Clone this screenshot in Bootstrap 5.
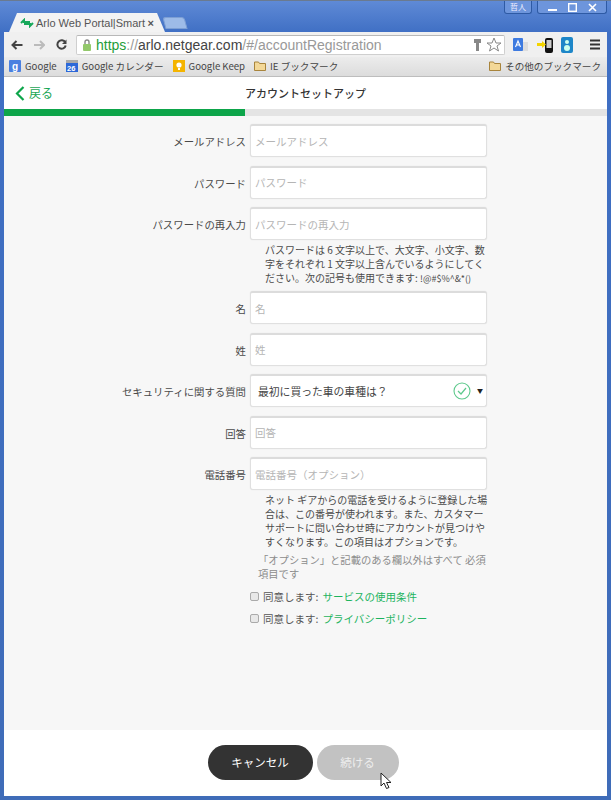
<!DOCTYPE html>
<html lang="ja">
<head>
<meta charset="utf-8">
<title>Arlo Web Portal</title>
<link href="https://cdn.jsdelivr.net/npm/bootstrap@5.3.0/dist/css/bootstrap.min.css" rel="stylesheet">
<style>
html,body{margin:0;height:800px;overflow:hidden}
body{width:611px;background:#3f6cb8;font-family:"Noto Sans CJK JP","Liberation Sans",sans-serif;font-size:11px;color:#4a4a4a}
.win{height:800px;padding:0 4px 4px;background:linear-gradient(#5f8ad6 0,#3f6fc4 32px,#3f6cb8 100%);border-top:1px solid #6a7a90}
.tabstrip{height:31px;position:relative}
.tab-on{position:absolute;left:5px;top:12px;width:156px;height:19px;background:#f3f3f3;clip-path:polygon(0 100%,8px 0,calc(100% - 8px) 0,100% 100%);display:flex;align-items:center;padding-left:11px;gap:2px;font:11px "Liberation Sans",sans-serif;color:#555;white-space:nowrap}
.tab-new{position:absolute;left:160px;top:16px;width:22px;height:12px;background:#9dbbe8;border:1px solid #7d9fd4;border-radius:3px 3px 0 0;transform:skewX(15deg)}
.tabx{margin-left:auto;margin-right:11px;font-weight:bold;font-size:11px;color:#555}
.wbtns{position:absolute;top:0;right:0;display:flex;gap:5px}
.wbtn{height:13px;border:1px solid #2e5aa4;border-top:0;border-radius:0 0 3px 3px;background:#6d95dc;color:#fff;font-size:8px;line-height:12px;display:flex;align-items:center;justify-content:center}
.wbtn-user{width:28px;color:#eef}
.wbtn-ctl{width:70px;justify-content:space-around;padding:0 4px}
.toolbar{height:25px;background:#f0f0f0;display:flex;align-items:center;padding-left:7px}
.tbgap{margin-left:11px}
.omni{width:429px;margin-left:9px;height:20px;background:#fff;border:1px solid #cfcfcf;border-top-color:#b8b8b8;border-radius:2px;display:flex;align-items:center;padding:0 2px 0 5px;font:14px "Liberation Sans",sans-serif;color:#999;white-space:nowrap}
.omni b{font-weight:400;color:#1f9d3a}
.omni i{font-style:normal;color:#444}
.ext1{margin-left:8px}
.ext2{margin-left:9px}
.ext3{margin-left:8px}
.ext4{margin-left:16px}
.bmarks{height:20px;background:linear-gradient(#ececec,#dcdcdc);border-bottom:1px solid #bdbdbd;display:flex;align-items:center;padding-left:5px;gap:9px;font-size:9.6px;color:#444;white-space:nowrap}
.bm{display:flex;align-items:center;gap:4px}
.bm-end{margin-left:auto;margin-right:6px}
.ic12{width:12px;height:12px;flex:none}
.pagehead{height:32px;background:#fff;position:relative;display:flex;align-items:center;justify-content:center;font-size:11px;font-weight:500;color:#333}
.backlink{position:absolute;left:11px;top:7px;display:flex;align-items:center;gap:4px;color:#1aa655;font-size:12px;font-weight:400}
.prog{height:7px;background:#e4e4e4}
.prog-fill{width:241px;height:7px;background:#0da54a}
.formarea{height:614px;background:#f7f7f7;padding-top:8px}
.frow{display:flex;align-items:flex-start;height:33px;margin-bottom:8.5px}
.flabel{width:246px;text-align:right;padding-right:4px;line-height:33px;font-size:10.4px;color:#4a4a4a;white-space:nowrap;margin-top:1px}
.finput{width:237px;height:33px;border:1px solid #e0e0e0;border-top:2px solid #dcdcdc;border-radius:3px;background:#fff;padding:0 4px;font-size:10.5px;line-height:30px;color:#333;box-shadow:0 0 1px #ddd;outline:0}
.finput::placeholder{color:#b5b5b5;opacity:1}
.selbox{display:flex;align-items:center;padding:0 2px 0 7px;font-size:10.8px;color:#444}
.selbox svg{margin-left:auto}
.caret-dn{font-size:6px;margin-left:6px;margin-right:1px;color:#222}
.helptxt{margin-left:261px;font-size:10px;line-height:14.2px;color:#4a4a4a;white-space:nowrap}
.help1{margin-top:-6px;margin-bottom:5px}
.help2{margin-top:-6px;margin-bottom:4px}
.symbols{font-size:9px}
.reqnote{margin-left:254px;font-size:10.3px;line-height:14px;color:#8c8c8c;white-space:nowrap}
.chk{margin-left:246px;display:flex;align-items:center;gap:4px;height:14px;margin-top:8px;color:#555;font-size:10.5px}
.chk a{color:#1db45f;text-decoration:none}
.chkbox{width:9px;height:9px;margin:0;appearance:none;-webkit-appearance:none;background:#e8e8e8;border:1px solid #aaa;border-radius:2px;flex:none}
.foot{height:66px;background:#fff;display:flex;justify-content:center;padding-top:15px;padding-right:5px;gap:4px;position:relative}
.pill{height:35px;border-radius:18px;border:0;font-size:11.5px;padding:0;color:#fff}
.pill-dark{width:105px;background:#333}
.pill-off{width:82px;background:#c2c2c2;color:#ededed}
.cursor{position:absolute;left:376px;top:42px}
</style>
</head>
<body>
<div class="win">
  <div class="tabstrip">
    <div class="tab-on">
      <svg width="14" height="10" viewBox="0 0 14 10"><path d="M1 5 L4 2 L4 4 L10 4 M13 5 L10 8 L10 6 L4 6" fill="none" stroke="#17a85a" stroke-width="2"/></svg>
      <span>Arlo Web Portal|Smart</span><span class="tabx">×</span>
    </div>
    <div class="tab-new"></div>
    <div class="wbtns">
      <div class="wbtn wbtn-user">哲人</div>
      <div class="wbtn wbtn-ctl">
        <svg width="9" height="9" viewBox="0 0 9 9"><rect x="0" y="6" width="9" height="2" fill="#fff"/></svg>
        <svg width="9" height="9" viewBox="0 0 9 9"><rect x="0.700" y="0.700" width="7.600" height="7.600" fill="none" stroke="#fff" stroke-width="1.400"/></svg>
        <svg width="9" height="9" viewBox="0 0 9 9"><path d="M1 1 L8 8 M8 1 L1 8" stroke="#fff" stroke-width="1.600"/></svg>
      </div>
    </div>
  </div>
  <div class="toolbar">
    <svg width="12" height="10" viewBox="0 0 11 10"><path d="M5 1 L1 5 L5 9 M1 5 H11" fill="none" stroke="#444" stroke-width="2"/></svg>
    <svg class="tbgap" width="11" height="10" viewBox="0 0 11 10"><path d="M6 1 L10 5 L6 9 M10 5 H0" fill="none" stroke="#bbb" stroke-width="2"/></svg>
    <svg class="tbgap" width="11" height="11" viewBox="0 0 11 11"><path d="M9.3 3.5 A4.2 4.2 0 1 0 9.7 6.5" fill="none" stroke="#444" stroke-width="2"/><path d="M10.5 0.5 V5 H6 Z" fill="#444"/></svg>
    <div class="omni">
      <svg width="10" height="12" viewBox="0 0 10 12" class="me-1 flex-none"><rect x="1" y="5" width="8" height="7" rx="1" fill="#93c86b"/><path d="M3 5 V3 a2 2 0 0 1 4 0 V5" fill="none" stroke="#888" stroke-width="1.4"/></svg>
      <span><b>https</b>://<i>arlo.netgear.com</i>/#/accountRegistration</span>
      <svg width="9" height="14" viewBox="0 0 9 14" class="ms-auto"><path d="M1 1 H8 V5 H6 V13 H3 V5 H1 Z" fill="#888"/></svg>
      <svg width="16" height="15" viewBox="0 0 16 15" class="ms-1"><path d="M8 1 L10 6 L15 6 L11 9 L12.5 14 L8 11 L3.500 14 L5 9 L1 6 L6 6 Z" fill="#fff" stroke="#888"/></svg>
    </div>
    <svg class="ext1" width="15" height="15" viewBox="0 0 15 15"><rect x="9" y="5" width="6" height="9" fill="#ddd"/><rect width="10" height="13" y="1" rx="1" fill="#3d7ae0"/><path d="M2.500 10 L5 4 L7.500 10 M3.500 8 H6.500" fill="none" stroke="#fff" stroke-width="1.100"/></svg>
    <svg class="ext2" width="16" height="16" viewBox="0 0 16 16"><rect x="8" y="1" width="8" height="15" rx="2" fill="#111"/><rect x="9.500" y="3" width="5" height="8" fill="#ccc"/><path d="M0 6 H5 V4 L9 7.500 L5 11 V9 H0 Z" fill="#f4d400"/></svg>
    <svg class="ext3" width="13" height="16" viewBox="0 0 13 16"><rect width="12" height="16" rx="2" fill="#1d86c8"/><circle cx="6" cy="5" r="2" fill="#cfe"/><circle cx="6" cy="11" r="3" fill="#cfe"/></svg>
    <svg class="ext4" width="11" height="11" viewBox="0 0 11 11"><path d="M0 1.500H10M0 5.500H10M0 9.500H10" stroke="#333" stroke-width="2"/></svg>
  </div>
  <div class="bmarks">
    <span class="bm"><svg class="ic12" viewBox="0 0 12 12"><rect width="12" height="12" rx="1" fill="#4a80e0"/><text x="3" y="10" font-size="10" font-weight="700" fill="#fff" font-family="Liberation Sans">g</text></svg>Google</span>
    <span class="bm"><svg class="ic12" viewBox="0 0 12 12"><rect width="12" height="12" fill="#2d68d8"/><rect width="12" height="3" fill="#aaa"/><text x="1" y="11" font-size="7.500" font-weight="700" fill="#fff" font-family="Liberation Sans">26</text></svg>Google カレンダー</span>
    <span class="bm"><svg class="ic12" viewBox="0 0 12 12"><rect width="12" height="12" fill="#f4b400"/><circle cx="6" cy="5" r="2.600" fill="#fff"/><rect x="5" y="8" width="2" height="2" fill="#fff"/></svg>Google Keep</span>
    <span class="bm"><svg class="ic12" viewBox="0 0 12 12"><path d="M0.500 2 H4.500 L5.500 3.500 H11.500 V10.500 H0.500 Z" fill="#f3d898" stroke="#a8843c"/></svg>IE ブックマーク</span>
    <span class="bm bm-end"><svg class="ic12" viewBox="0 0 12 12"><path d="M0.500 2 H4.500 L5.500 3.500 H11.500 V10.500 H0.500 Z" fill="#f3d898" stroke="#a8843c"/></svg>その他のブックマーク</span>
  </div>
  <div class="pagehead">
    <span class="backlink"><svg width="10" height="15" viewBox="0 0 10 15"><path d="M8.500 1 L2 7.500 L8.500 14" fill="none" stroke="#0da54a" stroke-width="2.200"/></svg>戻る</span>
    アカウントセットアップ
  </div>
  <div class="prog"><div class="prog-fill"></div></div>
  <form class="formarea">
    <div class="frow"><div class="flabel">メールアドレス</div><input class="finput" placeholder="メールアドレス"></div>
    <div class="frow"><div class="flabel">パスワード</div><input class="finput" placeholder="パスワード"></div>
    <div class="frow"><div class="flabel">パスワードの再入力</div><input class="finput" placeholder="パスワードの再入力"></div>
    <div class="helptxt help1">パスワードは 6 文字以上で、大文字、小文字、数<br>字をそれぞれ 1 文字以上含んでいるようにしてく<br>ださい。次の記号も使用できます: <span class="symbols">!@#$%^&amp;*()</span></div>
    <div class="frow"><div class="flabel">名</div><input class="finput" placeholder="名"></div>
    <div class="frow"><div class="flabel">姓</div><input class="finput" placeholder="姓"></div>
    <div class="frow"><div class="flabel">セキュリティに関する質問</div><div class="finput selbox">最初に買った車の車種は？<svg width="18" height="18" viewBox="0 0 18 18"><circle cx="9" cy="9" r="8" fill="none" stroke="#5dc98c" stroke-width="1.100"/><path d="M5 9 L8 12 L13 6" fill="none" stroke="#5dc98c" stroke-width="1.200"/></svg><span class="caret-dn">▼</span></div></div>
    <div class="frow"><div class="flabel">回答</div><input class="finput" placeholder="回答"></div>
    <div class="frow"><div class="flabel">電話番号</div><input class="finput" placeholder="電話番号（オプション）"></div>
    <div class="helptxt help2">ネット ギアからの電話を受けるように登録した場<br>合は、この番号が使われます。また、カスタマー<br>サポートに問い合わせ時にアカウントが見つけや<br>すくなります。この項目はオプションです。</div>
    <div class="reqnote">「オプション」と記載のある欄以外はすべて 必須<br>項目です</div>
    <label class="chk"><input type="checkbox" class="chkbox">同意します: <a href="#">サービスの使用条件</a></label>
    <label class="chk"><input type="checkbox" class="chkbox">同意します: <a href="#">プライバシーポリシー</a></label>
  </form>
  <div class="foot">
    <button type="button" class="pill pill-dark">キャンセル</button>
    <button type="button" class="pill pill-off">続ける</button>
    <svg class="cursor" width="12" height="18" viewBox="0 0 12 18"><path d="M1 1 V14 L4 11 L6.500 16.500 L9 15.500 L6.500 10.500 L11 10.500 Z" fill="#fff" stroke="#222"/></svg>
  </div>
</div>
</body>
</html>
